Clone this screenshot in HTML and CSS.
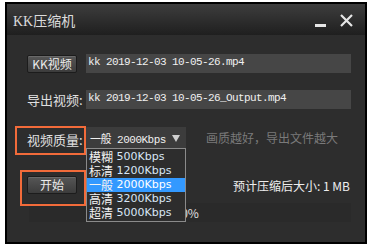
FILE: index.html
```html
<!DOCTYPE html>
<html lang="zh-CN">
  <head>
    <meta charset="UTF-8" />
    <meta name="viewport" content="width=device-width, initial-scale=1.0" />
    <title>KK压缩机</title>
    <link rel="stylesheet" href="styles.css">
  </head>
  <body>
    <div class="window">
      <div class="title-bar">
        <div class="title">KK压缩机</div>
        <div class="controls">
          <span class="min-btn"></span>
          <svg class="close-btn" width="13" height="13" viewBox="0 0 13 13">
            <path d="M1 1 L12 12 M12 1 L1 12" stroke="#e6e6e6" stroke-width="2.2" />
          </svg>
        </div>
      </div>

      <div class="content">
        <div class="row">
          <div class="lead"><button class="btn">KK视频</button></div>
          <div class="field">kk 2019-12-03 10-05-26.mp4</div>
        </div>

        <div class="row">
          <div class="lead label">导出视频:</div>
          <div class="field">kk 2019-12-03 10-05-26_Output.mp4</div>
        </div>

        <div class="row quality-row">
          <div class="lead label marked mark-quality">视频质量:</div>
          <div class="select-wrap">
            <div class="select">
              <span>一般 2000Kbps</span>
              <span class="arrow"></span>
            </div>
            <ul class="dropdown">
              <li><b>模糊</b> 500Kbps</li>
              <li><b>标清</b> 1200Kbps</li>
              <li class="active"><b>一般</b> 2000Kbps</li>
              <li><b>高清</b> 3200Kbps</li>
              <li><b>超清</b> 5000Kbps</li>
            </ul>
          </div>
          <div class="hint">画质越好，导出文件越大</div>
        </div>

        <div class="row start-row">
          <div class="lead marked mark-start"><button class="btn">开始</button></div>
          <div class="estimate">预计压缩后大小: 1 MB</div>
        </div>

        <div class="progress">0%</div>
      </div>
    </div>
  </body>
</html>
```

FILE: styles.css
```css
* {
  box-sizing: border-box;
}

body {
  margin: 0;
  background: #fff;
  font-family: "Noto Sans CJK SC", "DejaVu Sans", sans-serif;
  color: #e2e2e2;
}

.window {
  margin: 2px 0 0 5px;
  width: 362px;
  height: 242px;
  border: 2px solid #000;
  background: #2d2d2d;
}

.title-bar {
  height: 31px;
  display: flex;
  justify-content: space-between;
  align-items: center;
  padding: 0 12px 0 6px;
  background: linear-gradient(#3d3d3d, #1f1f1f);
}

.title {
  font-family: "Liberation Serif", "Noto Sans CJK SC", serif;
  font-size: 14px;
  color: #dcdcdc;
  padding-top: 1px;
}

.controls {
  display: flex;
  align-items: center;
  gap: 14px;
  padding-top: 2px;
}

.min-btn {
  display: block;
  width: 11px;
  height: 3px;
  margin-top: 10px;
  background: #e6e6e6;
}

.content {
  padding: 19px 14px 0 20px;
}

.row {
  display: flex;
  align-items: center;
  height: 19px;
  margin-bottom: 17px;
}

.lead {
  width: 59px;
  flex-shrink: 0;
}

.label {
  font-size: 13px;
  color: #e0e0e0;
  white-space: nowrap;
}

.btn {
  display: block;
  width: 50px;
  height: 18px;
  padding: 0;
  border: 1px solid #1c1c1c;
  border-radius: 2px;
  background: linear-gradient(#565656, #3c3c3c);
  box-shadow: inset 0 1px 0 rgba(255, 255, 255, 0.12);
  color: #ececec;
  font-family: "Noto Sans CJK SC", sans-serif;
  font-size: 12px;
  line-height: 16px;
}

.field {
  flex: 1;
  height: 19px;
  background: #464646;
  padding: 2px 0 0 2px;
  font-family: "Liberation Mono", monospace;
  font-size: 11px;
  letter-spacing: -0.6px;
  color: #f0f0f0;
  white-space: nowrap;
  line-height: 13px;
}

.marked {
  position: relative;
}

.marked::after {
  content: "";
  position: absolute;
  border: 2px solid #f26b3a;
}

.mark-quality::after {
  left: -12px;
  top: -1px;
  width: 67px;
  height: 25px;
}

.mark-start::after {
  left: -7px;
  top: -6px;
  width: 62px;
  height: 32px;
}

.quality-row {
  height: 21px;
  margin-top: 18px;
  margin-bottom: 28px;
}

.mark-quality {
  align-self: flex-start;
  padding-top: 3px;
}

.select-wrap {
  position: relative;
  width: 100px;
}

.select {
  height: 21px;
  display: flex;
  align-items: center;
  justify-content: space-between;
  padding: 1px 6px 0 4px;
  background: #3c3c3c;
  font-family: "Liberation Mono", "Noto Sans CJK SC", monospace;
  font-size: 11px;
  letter-spacing: -0.5px;
  color: #f0f0f0;
  white-space: nowrap;
}

.arrow {
  width: 0;
  height: 0;
  border-left: 4px solid transparent;
  border-right: 4px solid transparent;
  border-top: 7px solid #cfcfcf;
}

.dropdown {
  position: absolute;
  left: 0;
  top: 21px;
  width: 100px;
  margin: 0;
  padding: 1px 0;
  list-style: none;
  background: #2d2d2d;
  border: 1px solid #8a8a8a;
  z-index: 2;
}

.dropdown li {
  height: 14px;
  line-height: 14px;
  padding-left: 2px;
  font-family: "DejaVu Sans", sans-serif;
  font-size: 11px;
  color: #d8e6f6;
  white-space: nowrap;
}

.dropdown li b {
  display: inline-block;
  height: 14px;
  line-height: 14px;
  vertical-align: top;
  font-family: "Noto Sans CJK SC", sans-serif;
  font-weight: normal;
  font-size: 12px;
  color: #f2f2f2;
}

.dropdown li.active {
  background: #3399ff;
  color: #fff;
}

.hint {
  margin-left: 20px;
  font-size: 12px;
  color: #7a7a7a;
}

.start-row {
  height: 18px;
  margin-bottom: 9px;
}

.estimate {
  margin-left: auto;
  padding-right: 1px;
  font-size: 12px;
  color: #ededed;
}

.progress {
  height: 19px;
  margin-left: 2px;
  background: #2a2a2a;
  text-align: center;
  font-size: 12px;
  line-height: 19px;
  color: #e0e0e0;
}
```
